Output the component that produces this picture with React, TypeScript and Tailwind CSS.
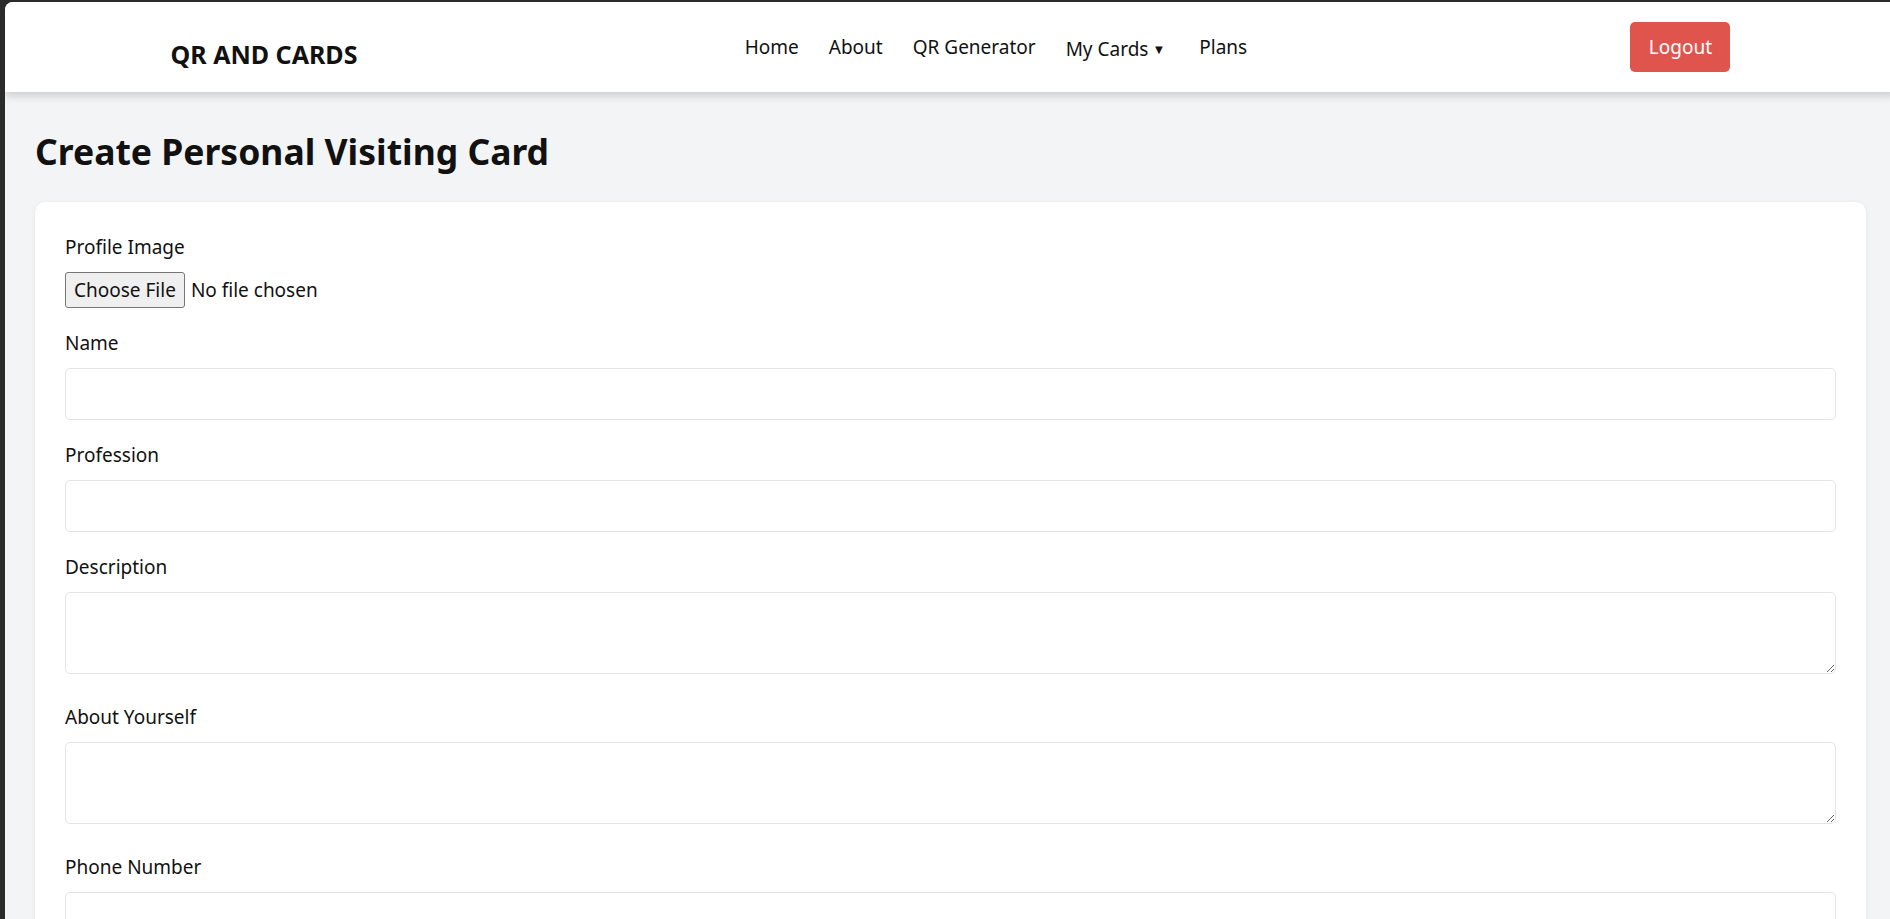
import { useState } from "react";

const NAV_LINKS = ["Home", "About", "QR Generator"];

const FIELDS = [
  { label: "Name", kind: "input" },
  { label: "Profession", kind: "input" },
  { label: "Description", kind: "textarea" },
  { label: "About Yourself", kind: "textarea" },
  { label: "Phone Number", kind: "input" },
  { label: "Email", kind: "input" },
  { label: "Website", kind: "input" },
];

const App = () => {
  const [values, setValues] = useState<Record<string, string>>({});

  return (
    <div className="h-screen w-screen overflow-hidden bg-[#2b2b2b] pl-[5px] pt-[2px] font-['Noto_Sans',sans-serif] text-[#111]">
      <div className="min-h-full w-[1891px] overflow-hidden rounded-tl-[8px] bg-[#f3f4f6]">
        {/* Navbar */}
        <nav className="relative z-10 bg-white shadow-[0_4px_8px_rgba(0,0,0,0.16)]">
          <div className="mx-auto flex h-[90px] max-w-[1600px] items-center justify-between px-5">
            <a className="mt-[14px] text-[25px] font-bold leading-[30px]">QR AND CARDS</a>
            <ul className="ml-[4px] flex items-center gap-[30px] text-[19px] leading-[30px]">
              {NAV_LINKS.map((link) => (
                <li key={link}>
                  <a>{link}</a>
                </li>
              ))}
              <li>
                <button className="mt-[3px] flex items-center gap-[4px]">
                  My Cards <span className="text-[13px]">▼</span>
                </button>
              </li>
              <li className="ml-[4px]">
                <a>Plans</a>
              </li>
            </ul>
            <button className="h-[50px] w-[100px] rounded-[5px] bg-[#df554e] text-[19px] leading-[30px] text-white">
              Logout
            </button>
          </div>
        </nav>

        {/* Form */}
        <main className="px-[30px] pt-[37px]">
          <h1 className="mb-[28px] text-[35.5px] font-bold leading-[45px]">
            Create Personal Visiting Card
          </h1>

          <div className="rounded-[10px] bg-white p-[30px] text-[19px] leading-[30px] shadow-[0_1px_4px_rgba(0,0,0,0.08)]">
            <div className="mb-[20px]">
              <label className="mb-[10px] block">Profile Image</label>
              <div className="flex items-center gap-[6px]">
                <span className="flex h-[36px] items-center rounded-[3px] border border-[#767676] bg-[#efefef] px-[8px]">
                  Choose File
                </span>
                <span>No file chosen</span>
              </div>
            </div>

            {FIELDS.map(({ label, kind }) => (
              <div key={label} className="mb-[20px]">
                <label className="mb-[10px] block">{label}</label>
                {kind === "input" ? (
                  <input
                    value={values[label] ?? ""}
                    onChange={(e) => setValues({ ...values, [label]: e.target.value })}
                    className="block h-[52px] w-full rounded-[5px] border border-[#e3e4e8] px-[10px] outline-none"
                  />
                ) : (
                  <textarea
                    value={values[label] ?? ""}
                    onChange={(e) => setValues({ ...values, [label]: e.target.value })}
                    className="h-[82px] w-full rounded-[5px] border border-[#e3e4e8] p-[10px] outline-none"
                  />
                )}
              </div>
            ))}
          </div>
        </main>
      </div>
    </div>
  );
};

export default App;
